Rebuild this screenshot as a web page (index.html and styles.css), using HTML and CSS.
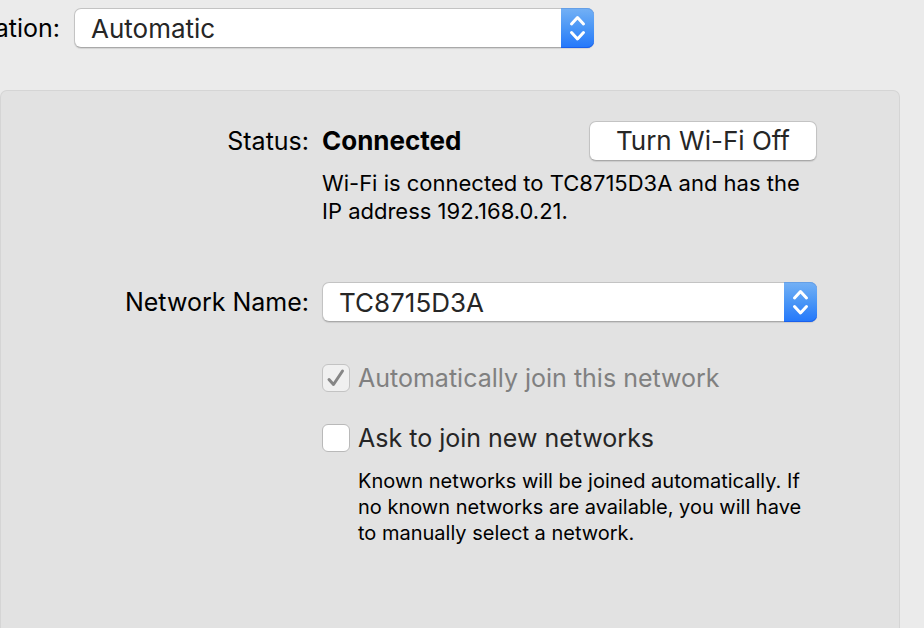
FILE: index.html
```html
<!DOCTYPE html>
<html lang="en">
<head>
  <meta charset="utf-8">
  <meta name="viewport" content="width=device-width, initial-scale=1">
  <title>Network</title>
  <link rel="stylesheet" href="styles.css">
</head>
<body>
  <header class="location">
    <label class="location-label" for="location">Location:</label>
    <div class="popup location-popup">
      <select id="location" class="popup-select">
        <option>Automatic</option>
      </select>
      <svg class="popup-arrows" viewBox="0 0 33 40" aria-hidden="true">
        <path d="M10.5 16 16.5 9.5 22.5 16M10.5 24.5 16.5 31 22.5 24.5"/>
      </svg>
    </div>
  </header>

  <main class="panel">
    <span class="label">Status:</span>
    <div class="status">
      <strong>Connected</strong>
      <button class="button" type="button">Turn Wi-Fi Off</button>
    </div>
    <p class="status-note">Wi-Fi is connected to TC8715D3A and has the IP address 192.168.0.21.</p>

    <label class="label" for="network">Network Name:</label>
    <div class="popup">
      <select id="network" class="popup-select">
        <option>TC8715D3A</option>
      </select>
      <svg class="popup-arrows" viewBox="0 0 33 40" aria-hidden="true">
        <path d="M10.5 16 16.5 9.5 22.5 16M10.5 24.5 16.5 31 22.5 24.5"/>
      </svg>
    </div>

    <div class="options">
      <label class="option option-disabled">
        <span class="check">
          <input class="check-box" type="checkbox" checked disabled>
          <svg class="check-mark" viewBox="0 0 28 28" aria-hidden="true">
            <path d="M7 15.5 11.5 20.5 20.5 7"/>
          </svg>
        </span>
        Automatically join this network
      </label>
      <label class="option">
        <span class="check">
          <input class="check-box" type="checkbox">
          <svg class="check-mark" viewBox="0 0 28 28" aria-hidden="true">
            <path d="M7 15.5 11.5 20.5 20.5 7"/>
          </svg>
        </span>
        Ask to join new networks
      </label>
      <p class="option-note">Known networks will be joined automatically. If no known networks are available, you will have to manually select a network.</p>
    </div>
  </main>
</body>
</html>
```
FILE: styles.css
```css
* {
  box-sizing: border-box;
}

body {
  display: flex;
  flex-direction: column;
  min-height: 100vh;
  margin: 0;
  overflow-x: hidden;
  background: #ebebeb;
  color: #000;
  font: 25px/40px Inter, "Liberation Sans", sans-serif;
}

p {
  margin: 0;
}

.location {
  display: flex;
  gap: 14px;
  padding: 8px 24px 42px 0;
}

/* The label runs past the left edge of the pane. */
.location-label {
  display: flex;
  flex: none;
  justify-content: flex-end;
  width: 60px;
}

.location-popup {
  flex: 0 1 520px;
}

.popup {
  display: grid;
  grid-template: 40px / 1fr 33px;
}

.popup-select {
  grid-area: 1 / 1 / 2 / 3;
  width: 100%;
  height: 40px;
  padding: 0 48px 0 16px;
  appearance: none;
  border: 1px solid #c3c3c3;
  border-bottom-color: #a9a9a9;
  border-radius: 7px;
  background: #fff;
  box-shadow: 0 1px 1px #0000001a;
  color: #262626;
  font-family: inherit;
  font-size: 26px;
}

.popup-arrows {
  grid-area: 1 / 2;
  width: 33px;
  height: 40px;
  border-radius: 0 7px 7px 0;
  background: linear-gradient(#74b1f5, #4a96f6 50%, #2377fb);
  box-shadow: inset 0 -1px #1a60ec, inset 0 1px #659fe6;
  fill: none;
  stroke: #fff;
  stroke-width: 3;
  stroke-linecap: round;
  stroke-linejoin: round;
  pointer-events: none;
}

.panel {
  display: grid;
  flex: 1;
  grid-template-columns: 308px 1fr;
  align-content: start;
  column-gap: 13px;
  margin-right: 24px;
  padding: 30px 82px 40px 0;
  border: 1px solid #d5d5d5;
  border-bottom: 0;
  border-radius: 7px 7px 0 0;
  background: #e2e2e2;
}

.label {
  text-align: right;
}

.status {
  display: flex;
  justify-content: space-between;
  font-size: 26px;
}

.button {
  height: 40px;
  padding: 0 26px;
  border: 1px solid #c3c3c3;
  border-bottom-color: #a9a9a9;
  border-radius: 7px;
  background: #fff;
  box-shadow: 0 1px 1px #0000001a;
  color: #262626;
  font-family: inherit;
  font-size: 26px;
  line-height: 36px;
}

.status-note {
  grid-column: 2;
  margin: 8px 0 57px;
  font-size: 22px;
  line-height: 28px;
}

.options {
  grid-column: 2;
  padding-top: 36px;
}

.option {
  display: flex;
  align-items: center;
  gap: 8px;
  color: #262626;
}

.option + .option {
  margin-top: 20px;
}

.option-disabled {
  color: #808080;
}

.check {
  display: grid;
}

.check-box {
  grid-area: 1 / 1;
  width: 28px;
  height: 28px;
  margin: 0;
  appearance: none;
  border: 1px solid #b9b9b9;
  border-radius: 6px;
  background: #fff;
}

.check-box:disabled {
  border-color: #c3c3c3;
  background: #f0f0f0;
}

.check-mark {
  grid-area: 1 / 1;
  width: 28px;
  height: 28px;
  fill: none;
  stroke: #868686;
  stroke-width: 3;
  stroke-linecap: round;
  stroke-linejoin: round;
  pointer-events: none;
  visibility: hidden;
}

.check-box:checked + .check-mark {
  visibility: visible;
}

.option-note {
  margin: 10px 0 0 36px;
  font-size: 20px;
  line-height: 26px;
}
```
